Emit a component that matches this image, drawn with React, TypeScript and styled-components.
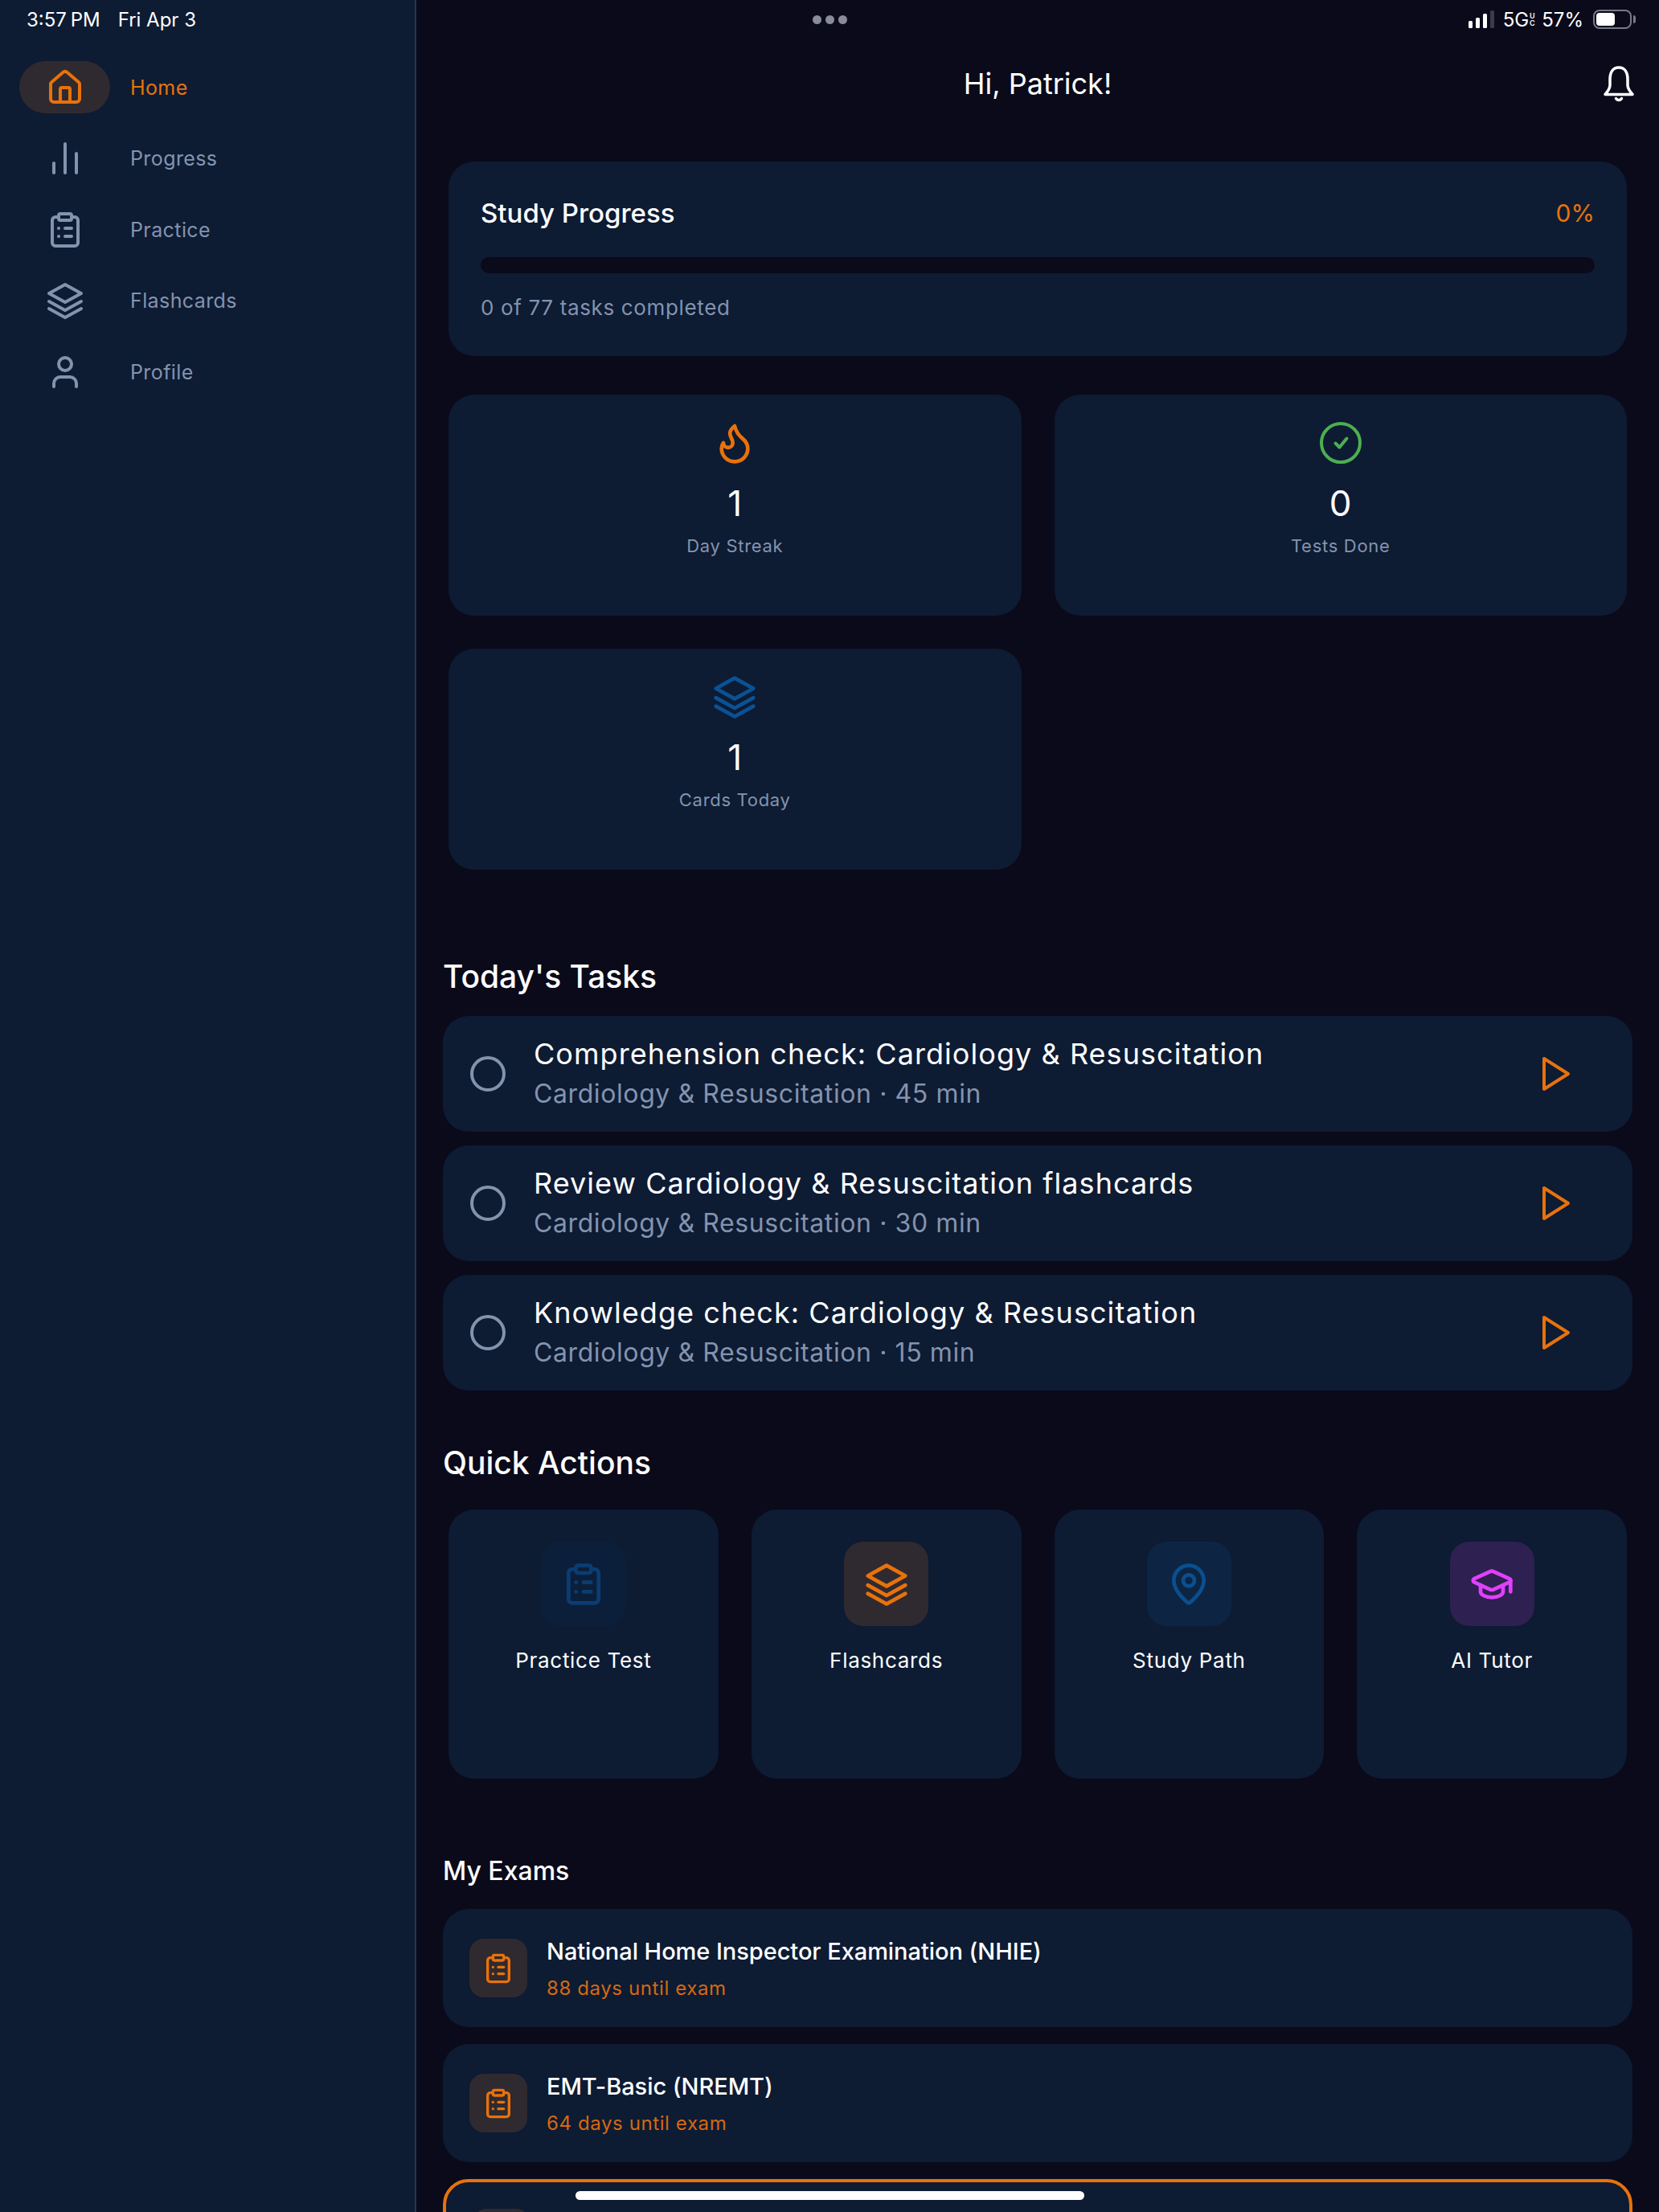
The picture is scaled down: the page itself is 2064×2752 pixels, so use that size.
import React from "react";
import styled, { createGlobalStyle } from "styled-components";
import { BarChart2, ClipboardList, Flame, GraduationCap, House, MapPin, User } from "lucide-react";

const orange = "#e8720c";
const muted = "#8493ad";
const card = "#0d1b33";
const ink = "#0a0a1a";

const GlobalStyle = createGlobalStyle`
  html, body {
    margin: 0;
    background: ${ink};
    font-family: Inter, "Noto Sans", sans-serif;
    color: #fff;
  }
`;

const Page = styled.div`
  position: relative;
  display: flex;
  width: 2064px;
  height: 2752px;
  overflow: hidden;
  background: ${ink};
`;

const StatusBar = styled.div`
  position: absolute;
  top: 0;
  left: 0;
  right: 0;
  height: 48px;
  padding: 0 33px;
  display: grid;
  grid-template-columns: 1fr auto 1fr;
  align-items: center;
  font-size: 24px;
`;

const StatusTime = styled.div`
  display: flex;
  gap: 22px;
  span:first-child {
    word-spacing: -2px;
  }
`;

const Dots = styled.div`
  display: flex;
  gap: 5px;
  span {
    width: 11px;
    height: 11px;
    border-radius: 50%;
    background: #8b8c99;
  }
`;

const StatusRight = styled.div`
  display: flex;
  justify-content: flex-end;
  align-items: center;
  gap: 8px;
  font-size: 24px;
`;

const NetworkLabel = styled.span`
  display: flex;
  align-items: center;
  sup {
    font-size: 9px;
    line-height: 9px;
    width: 8px;
    font-weight: 600;
    text-align: center;
  }
`;

const Battery = styled.div`
  position: relative;
  width: 48px;
  height: 24px;
  box-sizing: border-box;
  border: 2px solid #777a86;
  border-radius: 8px;
  padding: 2px;
  margin-left: 4px;
  margin-right: 1px;
  &::before {
    content: "";
    display: block;
    width: 58%;
    height: 100%;
    background: #fff;
    border-radius: 4px;
  }
  &::after {
    content: "";
    position: absolute;
    right: -7px;
    top: 5px;
    width: 3px;
    height: 10px;
    background: #777a86;
    border-radius: 0 3px 3px 0;
  }
`;

const Sidebar = styled.aside`
  width: 518px;
  flex: none;
  box-sizing: border-box;
  background: ${card};
  border-right: 2px solid #243a57;
  padding: 76px 0 0 24px;
  display: flex;
  flex-direction: column;
  gap: 23.6px;
`;

const NavItem = styled.div<{ $active?: boolean }>`
  display: flex;
  align-items: center;
  height: 65px;
  gap: 25px;
  font-size: 25px;
  letter-spacing: 0.4px;
  color: ${(p) => (p.$active ? orange : muted)};
`;

const NavPill = styled.div<{ $active?: boolean }>`
  width: 113px;
  height: 65px;
  border-radius: 33px;
  display: flex;
  align-items: center;
  justify-content: center;
  background: ${(p) => (p.$active ? "#2f2a2f" : "transparent")};
`;

const Main = styled.main`
  flex: 1;
  padding: 64px 33px 0;
  min-width: 0;
`;

const Header = styled.header`
  height: 80px;
  display: grid;
  grid-template-columns: 1fr auto 1fr;
  align-items: center;
  h1 {
    grid-column: 2;
    margin: 0;
    font-size: 36px;
    font-weight: 400;
  }
  svg {
    justify-self: end;
    margin-right: -5px;
  }
`;

const ProgressCard = styled.section`
  margin: 57px 7px 0;
  height: 242px;
  box-sizing: border-box;
  padding: 40px;
  background: ${card};
  border-radius: 32px;
`;

const ProgressTop = styled.div`
  display: flex;
  justify-content: space-between;
  align-items: center;
  height: 48px;
  font-size: 33px;
  font-weight: 500;
  span + span {
    color: ${orange};
    font-size: 30px;
    font-weight: 400;
  }
`;

const ProgressTrack = styled.div`
  margin-top: 31px;
  height: 20px;
  border-radius: 10px;
  background: ${ink};
`;

const ProgressNote = styled.div`
  margin-top: 25px;
  line-height: 36px;
  font-size: 26px;
  letter-spacing: 0.65px;
  color: ${muted};
`;

const StatGrid = styled.div`
  margin: 48px 7px 0;
  display: grid;
  grid-template-columns: 1fr 1fr;
  grid-auto-rows: 275px;
  gap: 41px;
`;

const StatCard = styled.div`
  background: ${card};
  border-radius: 32px;
  padding-top: 32px;
  box-sizing: border-box;
  display: flex;
  flex-direction: column;
  align-items: center;
`;

const StatValue = styled.div`
  margin-top: 21px;
  font-size: 44px;
  line-height: 52px;
`;

const StatLabel = styled.div`
  margin-top: 12px;
  font-size: 22px;
  line-height: 30px;
  letter-spacing: 0.7px;
  color: ${muted};
`;

const SectionTitle = styled.h2<{ $top: number; $small?: boolean }>`
  margin: ${(p) => p.$top}px 0 0;
  font-size: ${(p) => (p.$small ? 32 : 39)}px;
  line-height: ${(p) => (p.$small ? 44 : 50)}px;
  font-weight: 500;
`;

const TaskList = styled.div`
  margin-top: 24px;
  display: flex;
  flex-direction: column;
  gap: 17px;
`;

const TaskRow = styled.div`
  height: 144px;
  box-sizing: border-box;
  padding: 0 77px 0 34px;
  background: ${card};
  border-radius: 32px;
  display: flex;
  align-items: center;
`;

const TaskCircle = styled.div`
  width: 44px;
  height: 44px;
  box-sizing: border-box;
  border: 4px solid ${muted};
  border-radius: 50%;
  flex: none;
`;

const TaskText = styled.div`
  flex: 1;
  margin-left: 35px;
`;

const TaskTitle = styled.div`
  font-size: 36px;
  line-height: 50px;
  letter-spacing: 1.05px;
`;

const TaskSub = styled.div`
  font-size: 32px;
  line-height: 50px;
  letter-spacing: 0.6px;
  color: ${muted};
`;

const ActionGrid = styled.div`
  margin: 33px 7px 0;
  display: grid;
  grid-template-columns: repeat(4, 1fr);
  gap: 41px;
`;

const ActionCard = styled.div`
  height: 335px;
  box-sizing: border-box;
  padding-top: 40px;
  background: ${card};
  border-radius: 32px;
  display: flex;
  flex-direction: column;
  align-items: center;
`;

const ActionIcon = styled.div<{ $bg: string }>`
  width: 105px;
  height: 105px;
  border-radius: 24px;
  background: ${(p) => p.$bg};
  display: flex;
  align-items: center;
  justify-content: center;
`;

const ActionLabel = styled.div`
  margin-top: 26px;
  font-size: 26px;
  line-height: 34px;
  letter-spacing: 0.7px;
`;

const ExamList = styled.div`
  margin-top: 25px;
  display: flex;
  flex-direction: column;
  gap: 21px;
`;

const ExamRow = styled.div<{ $current?: boolean }>`
  height: 147px;
  box-sizing: border-box;
  padding: 0 33px;
  background: ${card};
  border-radius: 32px;
  border: ${(p) => (p.$current ? `4px solid ${orange}` : "none")};
  display: flex;
  align-items: center;
  flex: none;
`;

const ExamIcon = styled.div`
  width: 72px;
  height: 73px;
  border-radius: 18px;
  background: #2f2a2f;
  display: flex;
  align-items: center;
  justify-content: center;
  flex: none;
`;

const ExamText = styled.div`
  margin-left: 24px;
  padding-top: 1px;
`;

const ExamTitle = styled.div`
  font-size: 29px;
  line-height: 40px;
  font-weight: 500;
  letter-spacing: -0.05px;
`;

const ExamDays = styled.div`
  margin-top: 9px;
  font-size: 24px;
  line-height: 34px;
  letter-spacing: 0.6px;
  color: #d5690f;
`;

const HomeIndicator = styled.div`
  position: absolute;
  left: 716px;
  bottom: 15px;
  width: 633px;
  height: 11px;
  border-radius: 6px;
  background: #fff;
`;

const Layers = ({ size, color }: { size: number; color: string }) => (
  <svg width={size} height={size} viewBox="0 0 24 24" fill="none" stroke={color} strokeWidth={2} strokeLinecap="round" strokeLinejoin="round">
    <path d="M12 2 22 7.5 12 13 2 7.5Z" />
    <path d="M2 12.5 12 18l10-5.5" />
    <path d="M2 17l10 5.5L22 17" />
  </svg>
);

const CheckCircle = () => (
  <svg width={56} height={56} viewBox="0 0 56 56" fill="none" stroke="#4caf50" strokeLinecap="round" strokeLinejoin="round">
    <circle cx="28" cy="28" r="24" strokeWidth={4} />
    <path d="M21.5 28.5l5 5 9-11" strokeWidth={4} />
  </svg>
);

const Play = () => (
  <svg width={36} height={44} viewBox="0 0 36 44" fill="none" stroke={orange} strokeWidth={4} strokeLinejoin="round">
    <path d="M3 3 33 22 3 41Z" />
  </svg>
);

const BellIcon = () => (
  <svg width={44} height={46} viewBox="0 0 44 46" fill="none" stroke="#fff" strokeWidth={3.5} strokeLinecap="round" strokeLinejoin="round">
    <path d="M22 3C14 3 11 10 11 18v7c0 4.500-3 8-6 11.500h34C36 33 33 29.500 33 25v-7C33 10 30 3 22 3Z" />
    <path d="M18.500 41.500a4 4 0 0 0 7 0" />
  </svg>
);

const Signal = () => (
  <svg width={36} height={22} viewBox="0 0 36 22">
    <rect x="1" y="13" width="5" height="9" rx="1.5" fill="#fff" />
    <rect x="10" y="9" width="5" height="13" rx="1.5" fill="#fff" />
    <rect x="19" y="4" width="5" height="18" rx="1.5" fill="#fff" />
    <rect x="28" y="0" width="5" height="22" rx="1.5" fill="#3b3c48" />
  </svg>
);

const nav = [
  { label: "Home", Icon: House, active: true },
  { label: "Progress", Icon: BarChart2 },
  { label: "Practice", Icon: ClipboardList },
  { label: "Flashcards", Icon: null },
  { label: "Profile", Icon: User },
];

const tasks = [
  { title: "Comprehension check: Cardiology & Resuscitation", sub: "Cardiology & Resuscitation · 45 min" },
  { title: "Review Cardiology & Resuscitation flashcards", sub: "Cardiology & Resuscitation · 30 min" },
  { title: "Knowledge check: Cardiology & Resuscitation", sub: "Cardiology & Resuscitation · 15 min" },
];

export default function App() {
  return (
    <Page>
      <GlobalStyle />
      <Sidebar>
        {nav.map(({ label, Icon, active }) => {
          const color = active ? orange : muted;
          return (
            <NavItem key={label} $active={active}>
              <NavPill $active={active}>
                {Icon ? <Icon size={48} color={color} strokeWidth={2} /> : <Layers size={48} color={color} />}
              </NavPill>
              {label}
            </NavItem>
          );
        })}
      </Sidebar>

      <Main>
        <Header>
          <h1>Hi, Patrick!</h1>
          <BellIcon />
        </Header>

        <ProgressCard>
          <ProgressTop>
            <span>Study Progress</span>
            <span>0%</span>
          </ProgressTop>
          <ProgressTrack />
          <ProgressNote>0 of 77 tasks completed</ProgressNote>
        </ProgressCard>

        <StatGrid>
          <StatCard>
            <Flame size={56} color={orange} strokeWidth={2} />
            <StatValue>1</StatValue>
            <StatLabel>Day Streak</StatLabel>
          </StatCard>
          <StatCard>
            <CheckCircle />
            <StatValue>0</StatValue>
            <StatLabel>Tests Done</StatLabel>
          </StatCard>
          <StatCard>
            <Layers size={56} color="#0a5296" />
            <StatValue>1</StatValue>
            <StatLabel>Cards Today</StatLabel>
          </StatCard>
        </StatGrid>

        <SectionTitle $top={108}>Today's Tasks</SectionTitle>
        <TaskList>
          {tasks.map((t) => (
            <TaskRow key={t.title}>
              <TaskCircle />
              <TaskText>
                <TaskTitle>{t.title}</TaskTitle>
                <TaskSub>{t.sub}</TaskSub>
              </TaskText>
              <Play />
            </TaskRow>
          ))}
        </TaskList>

        <SectionTitle $top={65}>Quick Actions</SectionTitle>
        <ActionGrid>
          <ActionCard>
            <ActionIcon $bg="#0c1f3a">
              <ClipboardList size={56} color="#0a3d73" strokeWidth={2} />
            </ActionIcon>
            <ActionLabel>Practice Test</ActionLabel>
          </ActionCard>
          <ActionCard>
            <ActionIcon $bg="#2f2a2f">
              <Layers size={56} color={orange} />
            </ActionIcon>
            <ActionLabel>Flashcards</ActionLabel>
          </ActionCard>
          <ActionCard>
            <ActionIcon $bg="#0d2542">
              <MapPin size={56} color="#0a4f8f" strokeWidth={2} />
            </ActionIcon>
            <ActionLabel>Study Path</ActionLabel>
          </ActionCard>
          <ActionCard>
            <ActionIcon $bg="#2e2050">
              <GraduationCap size={56} color="#e040fb" strokeWidth={2} />
            </ActionIcon>
            <ActionLabel>AI Tutor</ActionLabel>
          </ActionCard>
        </ActionGrid>

        <SectionTitle $top={93} $small>My Exams</SectionTitle>
        <ExamList>
          <ExamRow>
            <ExamIcon>
              <ClipboardList size={40} color={orange} strokeWidth={2} />
            </ExamIcon>
            <ExamText>
              <ExamTitle>National Home Inspector Examination (NHIE)</ExamTitle>
              <ExamDays>88 days until exam</ExamDays>
            </ExamText>
          </ExamRow>
          <ExamRow>
            <ExamIcon>
              <ClipboardList size={40} color={orange} strokeWidth={2} />
            </ExamIcon>
            <ExamText>
              <ExamTitle>EMT-Basic (NREMT)</ExamTitle>
              <ExamDays>64 days until exam</ExamDays>
            </ExamText>
          </ExamRow>
          <ExamRow $current>
            <ExamIcon />
          </ExamRow>
        </ExamList>
      </Main>

      <StatusBar>
        <StatusTime>
          <span>3:57 PM</span>
          <span>Fri Apr 3</span>
        </StatusTime>
        <Dots>
          <span />
          <span />
          <span />
        </Dots>
        <StatusRight>
          <Signal />
          <NetworkLabel>
            5G
            <sup>
              U
              <br />C
            </sup>
          </NetworkLabel>
          <span>57%</span>
          <Battery />
        </StatusRight>
      </StatusBar>
      <HomeIndicator />
    </Page>
  );
}
